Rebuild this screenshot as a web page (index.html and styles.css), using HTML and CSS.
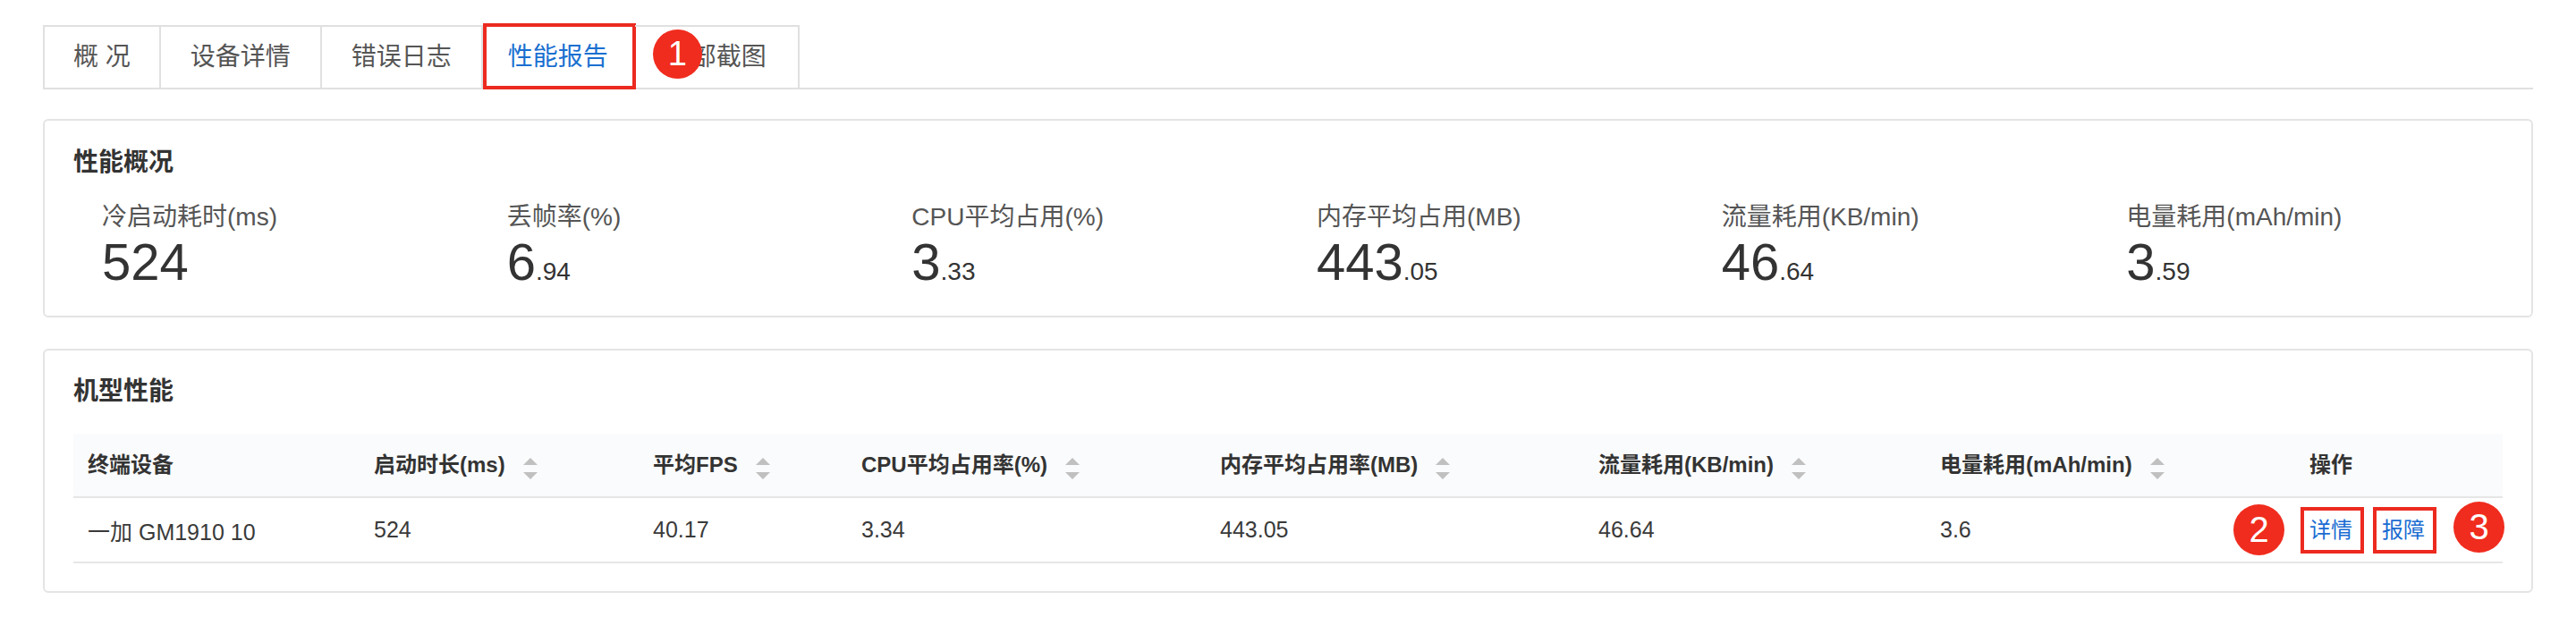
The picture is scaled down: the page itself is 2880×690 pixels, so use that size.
FILE: index.html
```html
<!DOCTYPE html>
<html lang="zh-CN">
<head>
<meta charset="utf-8">
<title>性能报告</title>
<link rel="stylesheet" href="styles.css">
</head>
<body>
<div class="page">
  <div class="tabs">
    <div class="tab first">概 况</div>
    <div class="tab">设备详情</div>
    <div class="tab">错误日志</div>
    <div class="tab active">性能报告<span class="annot-box"></span></div>
    <div class="tab last">全部截图<span class="badge badge-tab">1</span></div>
  </div>

  <section class="card card-summary">
    <h2 class="card-title">性能概况</h2>
    <div class="stats">
      <div class="stat"><div class="stat-label">冷启动耗时(ms)</div><div class="stat-value">524</div></div>
      <div class="stat"><div class="stat-label">丢帧率(%)</div><div class="stat-value">6<span class="dec">.94</span></div></div>
      <div class="stat"><div class="stat-label">CPU平均占用(%)</div><div class="stat-value">3<span class="dec">.33</span></div></div>
      <div class="stat"><div class="stat-label">内存平均占用(MB)</div><div class="stat-value">443<span class="dec">.05</span></div></div>
      <div class="stat"><div class="stat-label">流量耗用(KB/min)</div><div class="stat-value">46<span class="dec">.64</span></div></div>
      <div class="stat"><div class="stat-label">电量耗用(mAh/min)</div><div class="stat-value">3<span class="dec">.59</span></div></div>
    </div>
  </section>

  <section class="card card-table">
    <h2 class="card-title">机型性能</h2>
    <table class="perf-table">
      <colgroup>
        <col class="c1"><col class="c2"><col class="c3"><col class="c4"><col class="c5"><col class="c6"><col class="c7"><col class="c8">
      </colgroup>
      <thead>
        <tr>
          <th><span class="th-inner">终端设备</span></th>
          <th><span class="th-inner">启动时长(ms)<span class="sorter"><i class="up"></i><i class="down"></i></span></span></th>
          <th><span class="th-inner">平均FPS<span class="sorter"><i class="up"></i><i class="down"></i></span></span></th>
          <th><span class="th-inner">CPU平均占用率(%)<span class="sorter"><i class="up"></i><i class="down"></i></span></span></th>
          <th><span class="th-inner">内存平均占用率(MB)<span class="sorter"><i class="up"></i><i class="down"></i></span></span></th>
          <th><span class="th-inner">流量耗用(KB/min)<span class="sorter"><i class="up"></i><i class="down"></i></span></span></th>
          <th><span class="th-inner">电量耗用(mAh/min)<span class="sorter"><i class="up"></i><i class="down"></i></span></span></th>
          <th class="center"><span class="th-inner">操作</span></th>
        </tr>
      </thead>
      <tbody>
        <tr>
          <td>一加 GM1910 10</td>
          <td>524</td>
          <td>40.17</td>
          <td>3.34</td>
          <td>443.05</td>
          <td>46.64</td>
          <td>3.6</td>
          <td>
            <div class="actions">
              <span class="badge badge-left">2</span>
              <a class="link" href="#">详情</a>
              <a class="link" href="#">报障</a>
              <span class="badge badge-right">3</span>
            </div>
          </td>
        </tr>
      </tbody>
    </table>
  </section>
</div>
</body>
</html>
```

FILE: styles.css
```css
* { box-sizing: border-box; }

html, body {
  margin: 0;
  padding: 0;
  background: #ffffff;
}

body {
  font-family: "Liberation Sans", "Noto Sans CJK SC", sans-serif;
  color: #333333;
}

.page {
  padding: 28px 48px 0 48px;
}

/* Tabs */
.tabs {
  display: flex;
  border-bottom: 2px solid #e0e0e0;
}

.tab {
  position: relative;
  height: 70px;
  line-height: 68px;
  padding: 0 33px;
  border-top: 2px solid #e0e0e0;
  border-right: 2px solid #e0e0e0;
  font-size: 28px;
  color: #555555;
  white-space: nowrap;
}

.tab.first {
  border-left: 2px solid #e0e0e0;
  padding: 0 32px;
}

.tab.active {
  color: #1a6fd0;
  padding: 0 28px;
}

.tab.last {
  padding: 0 35px;
}

.annot-box {
  position: absolute;
  left: 0;
  top: -4px;
  right: -3px;
  bottom: -2px;
  border: 4px solid #ec2a1f;
}

.badge {
  position: absolute;
  width: 57px;
  height: 57px;
  border-radius: 50%;
  background: #f02c1e;
  color: #ffffff;
  font-size: 40px;
  line-height: 57px;
  text-align: center;
  font-weight: 500;
}

.badge-tab {
  left: 20px;
  top: 3px;
  width: 55px;
  height: 55px;
  line-height: 55px;
  font-size: 38px;
}

/* Cards */
.card {
  border: 2px solid #e4e4e4;
  border-radius: 6px;
  padding: 27px 32px 30px 32px;
}

.card-summary {
  margin-top: 33px;
}

.card-table {
  margin-top: 35px;
  padding-top: 26px;
  padding-bottom: 31px;
}

.card-title {
  margin: 0;
  height: 40px;
  font-size: 28px;
  line-height: 40px;
  font-weight: 700;
  color: #333333;
}

.stats {
  display: grid;
  grid-template-columns: repeat(6, 1fr);
  margin-top: 21px;
}

.stat {
  padding-left: 32px;
}

.stat-label {
  height: 40px;
  font-size: 28px;
  line-height: 40px;
  color: #555555;
  white-space: nowrap;
}

.stat-value {
  height: 60px;
  font-size: 58px;
  line-height: 60px;
  color: #333333;
  white-space: nowrap;
}

.stat-value .dec {
  font-size: 28px;
  line-height: 28px;
}

/* Table */
.perf-table {
  width: 100%;
  margin-top: 27px;
  border-collapse: collapse;
  table-layout: fixed;
}

.c1 { width: 320px; }
.c2 { width: 312px; }
.c3 { width: 233px; }
.c4 { width: 401px; }
.c5 { width: 423px; }
.c6 { width: 382px; }
.c7 { width: 261px; }
.c8 { width: 384px; }

.perf-table th {
  background: #fafbfc;
  height: 71px;
  padding: 0 16px;
  text-align: left;
  font-size: 24px;
  font-weight: 700;
  color: #333333;
  border-bottom: 2px solid #e6e6e6;
  white-space: nowrap;
}

.perf-table th.center {
  text-align: center;
}

.th-inner {
  display: inline-flex;
  align-items: center;
  gap: 20px;
  height: 36px;
  line-height: 36px;
  vertical-align: middle;
}

.perf-table td {
  height: 73px;
  padding: 0 16px;
  font-size: 25px;
  color: #3a3a3a;
  border-bottom: 2px solid #e6e6e6;
  white-space: nowrap;
}

.sorter {
  display: flex;
  flex-direction: column;
  gap: 8px;
  margin-top: 8px;
}

.sorter i {
  display: block;
  width: 0;
  height: 0;
  border-left: 8px solid transparent;
  border-right: 8px solid transparent;
}

.sorter .up {
  border-bottom: 8px solid #c0c0c0;
}

.sorter .down {
  border-top: 8px solid #c0c0c0;
}

.actions {
  position: relative;
  display: flex;
  gap: 10px;
  padding-left: 142px;
  align-items: center;
}

.link {
  display: block;
  height: 52px;
  line-height: 44px;
  padding: 0 9px 0 6px;
  border: 4px solid #ec2a1f;
  font-size: 24px;
  color: #1a6cd2;
  text-decoration: none;
}

.badge-left {
  left: 67px;
  top: -3px;
}

.badge-right {
  left: 313px;
  top: -6px;
}
```
